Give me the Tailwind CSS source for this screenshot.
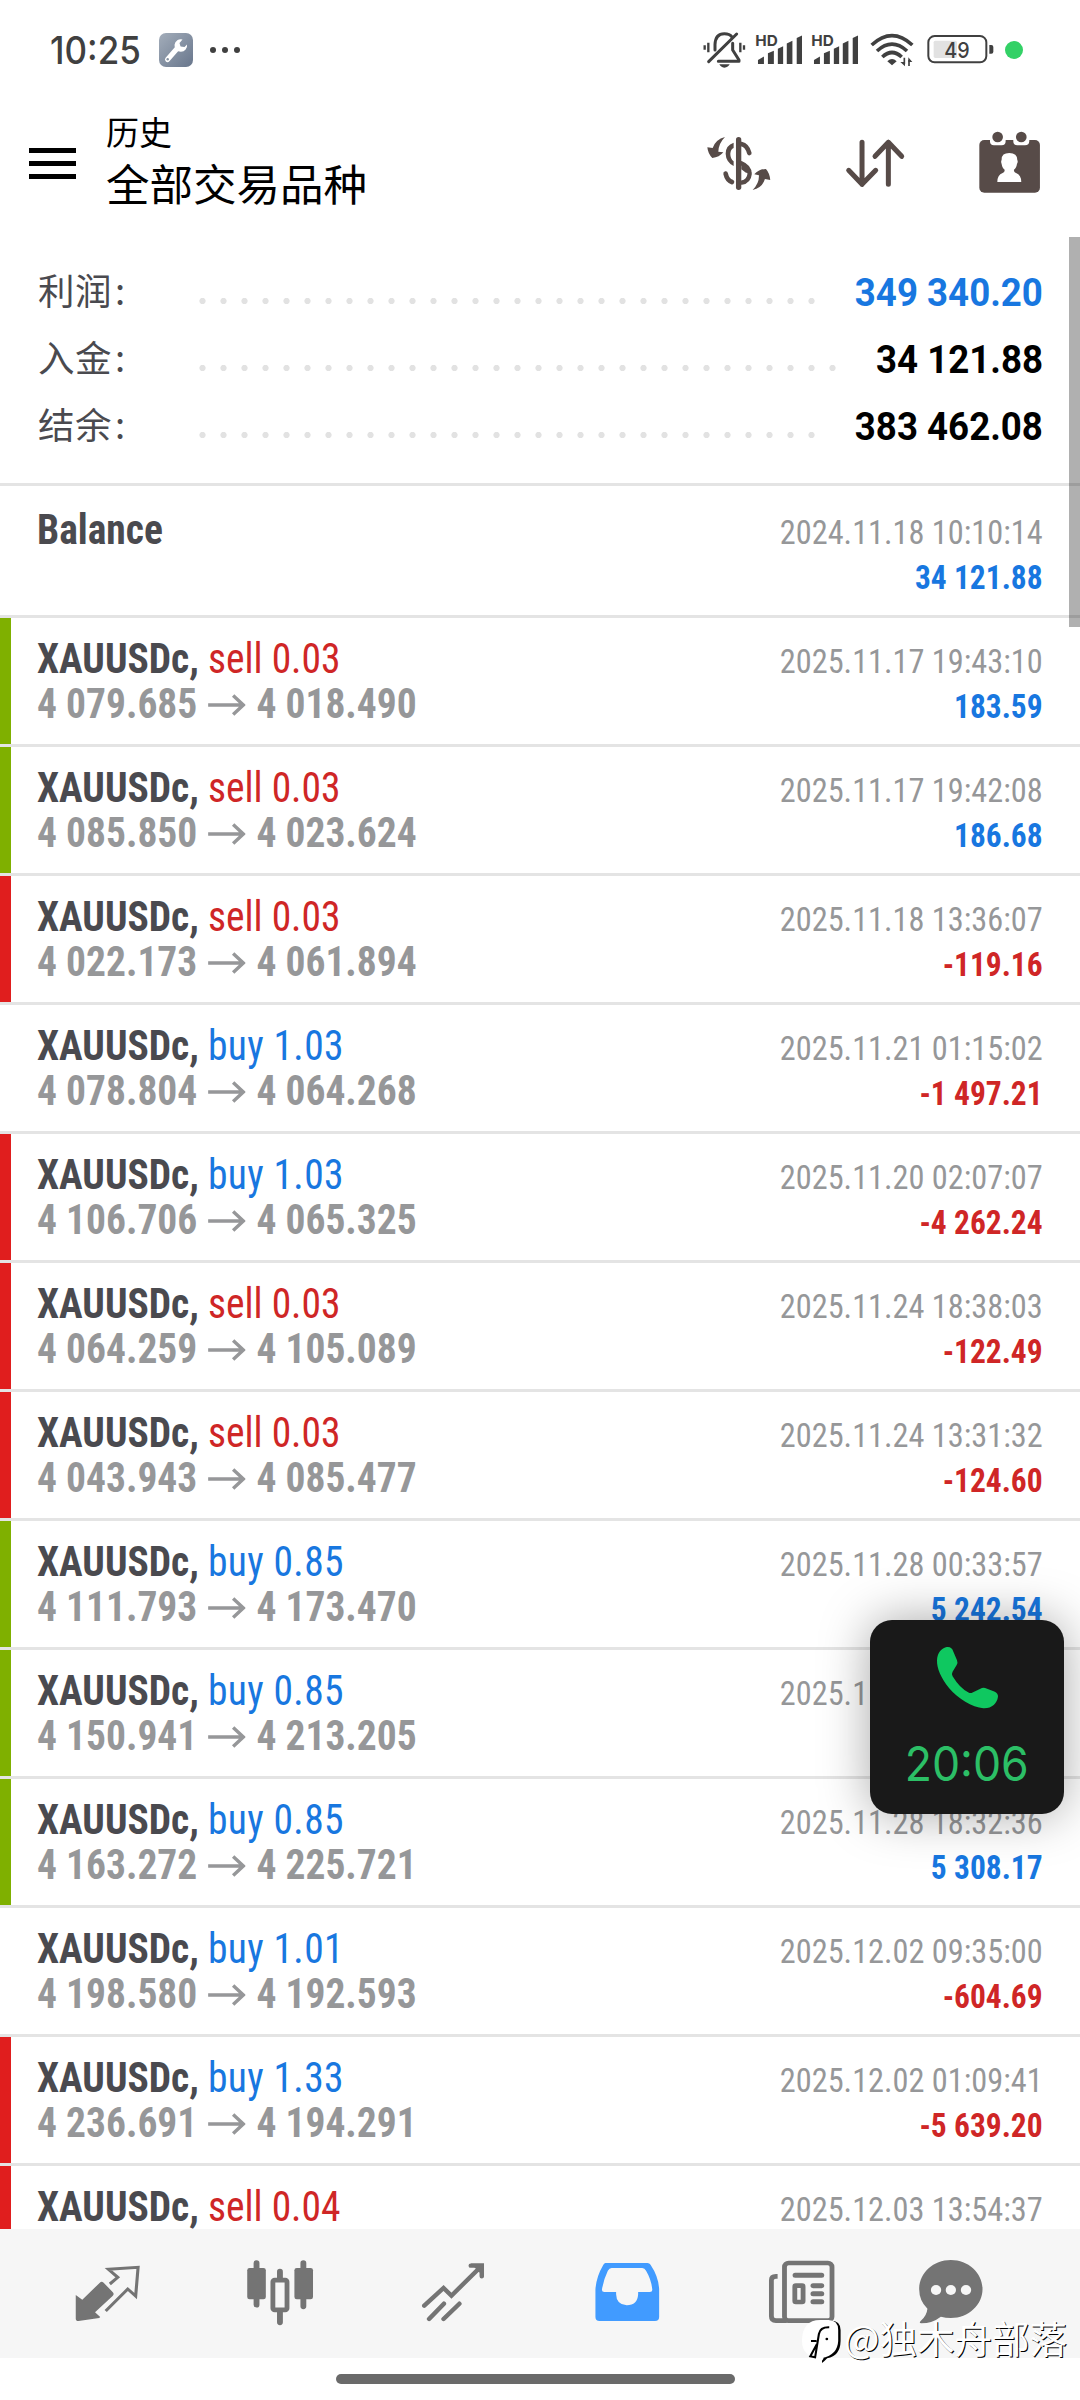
<!DOCTYPE html>
<html lang="zh-CN">
<head>
<meta charset="utf-8">
<title>历史</title>
<script src="https://cdn.jsdelivr.net/npm/@tailwindcss/browser@4"></script>
</head>
<body class="bg-white">
<div class="relative flex h-[2400px] w-[1080px] flex-col overflow-hidden bg-white font-[Roboto,'Noto_Sans_CJK_SC',sans-serif]">

  <!-- status bar -->
  <div class="flex h-[100px] shrink-0 items-center justify-between pr-[57px] pl-[50px]">
    <div class="flex items-center">
      <span class="w-[109px] origin-left scale-x-[0.92] text-[38px] leading-[40px] font-medium text-[#404040] font-[Inter,sans-serif]">10:25</span>
      <svg class="h-[34px] w-[34px]" viewBox="0 0 34 34">
        <defs><linearGradient id="g" x1="0" y1="0" x2="1" y2="1"><stop offset="0" stop-color="#a3adba"/><stop offset="1" stop-color="#68768c"/></linearGradient></defs>
        <rect width="34" height="34" rx="7" fill="url(#g)"/>
        <path d="M8.5 26.5 L19 14.5" stroke="#fff" stroke-width="5" stroke-linecap="round"/>
        <path d="M23.5 6.5 A6.3 6.3 0 1 0 28 11.5 L25.5 14 L21.5 13.5 L20.5 10 Z" fill="#fff"/>
        <circle cx="8.7" cy="26.2" r="1.2" fill="#8592a3"/>
      </svg>
      <div class="ml-[17px] flex gap-[6px]">
        <i class="size-[6px] rounded-full bg-[#404040]"></i><i class="size-[6px] rounded-full bg-[#404040]"></i><i class="size-[6px] rounded-full bg-[#404040]"></i>
      </div>
    </div>
    <div class="flex items-center">
      <svg class="h-[40px] w-[45px]" viewBox="125 90 135 120" fill="none" stroke="#404040" stroke-width="9" stroke-linecap="round">
        <path d="M133 136V149M144 128V157M240 128V157M251 136V149" stroke-linecap="butt" stroke-width="7"/>
        <path d="M164 150V134Q165 101 192 101Q208 101 214 110M217 130V150L236 180V184H174" stroke-linejoin="round"/>
        <path d="M145 185L229 102"/>
        <path d="M177 193H208Q204 202 192 203Q181 202 177 193Z" fill="#404040" stroke="none"/>
      </svg>
      <svg class="ml-[8px] h-[40px] w-[48px]" viewBox="285 90 145 120" fill="#404040">
        <text x="286" y="137" font-family="Inter" font-weight="700" font-size="45" textLength="68" lengthAdjust="spacingAndGlyphs">HD</text>
        <path d="M294 192V180L312 170V192ZM324 192V160L342 152V192ZM354 192V146L370 139V192ZM381 192V130L398 122V192ZM411 192V114L427 106V192Z"/>
      </svg>
      <svg class="ml-[8px] h-[40px] w-[48px]" viewBox="453 90 145 120" fill="#404040">
        <text x="454" y="137" font-family="Inter" font-weight="700" font-size="45" textLength="68" lengthAdjust="spacingAndGlyphs">HD</text>
        <path d="M462 192V180L480 170V192ZM492 192V160L510 152V192ZM522 192V146L538 139V192ZM549 192V130L566 122V192ZM579 192V114L595 106V192Z"/>
      </svg>
      <svg class="ml-[11px] h-[40px] w-[44px]" viewBox="630 90 132 120" fill="none" stroke="#404040" stroke-width="11">
        <path d="M635 135Q696 79 757 135M651 153Q696 112 741 153M667 171Q696 144 725 171"/>
        <path d="M682 184Q696 170 710 184L696 196Z" fill="#404040" stroke="none"/>
        <path d="M733 173V192M747 179V198" stroke-width="5"/>
        <path d="M721 186H735V199ZM745 172L757 186H745Z" fill="#404040" stroke="none"/>
      </svg>
      <svg class="ml-[12px] h-[40px] w-[68px]" viewBox="798 90 204 120">
        <rect x="821" y="122" width="70" height="52" rx="5" fill="#e2e2e2"/>
        <rect x="805" y="108" width="174" height="79" rx="19" fill="none" stroke="#404040" stroke-width="6"/>
        <path d="M988 135H994Q1000 135 1000 141V155Q1000 161 994 161H988Z" fill="#404040"/>
        <text x="853" y="173" font-family="Inter" font-weight="500" font-size="66" textLength="76" lengthAdjust="spacingAndGlyphs" fill="#404040">49</text>
      </svg>
      <i class="ml-[11px] size-[18px] rounded-full bg-[#33d166]"></i>
    </div>
  </div>

  <!-- app bar -->
  <header class="flex h-[137px] shrink-0 items-center justify-between pr-[37px] pl-[29px]">
    <div class="flex items-center gap-[30px]">
      <div class="mt-[-10px] flex w-[47px] flex-col gap-[8px]">
        <i class="h-[5px] bg-black"></i><i class="h-[5px] bg-black"></i><i class="h-[5px] bg-black"></i>
      </div>
      <div class="mt-[-13px] text-black">
        <div class="text-[33px] leading-[50px]">历史</div>
        <div class="text-[43.5px] leading-[56px]">全部交易品种</div>
      </div>
    </div>
    <div class="mt-[-12px] flex gap-[70px]">
      <svg class="h-[65px] w-[66.6px]" viewBox="140 390 200 195" fill="none" stroke="#574b48" stroke-linecap="round">
        <path d="M238 419V562" stroke-width="16"/>
        <path d="M246 432Q264 436 270 459" stroke-width="14"/>
        <path d="M246 490Q271 500 271 522Q269 544 247 548" stroke-width="13"/>
        <path d="M246 488Q262 495 270 505L277 520L260 518L246 508Z" fill="#574b48" stroke="none"/>
        <path d="M223 428Q199 436 199 461Q200 486 223 498V484Q213 476 213 461Q214 448 223 444Z" fill="#574b48" stroke="none"/>
        <path d="M199 521Q203 540 218 546" stroke-width="14"/>
        <path d="M197 411Q169 418 160 444L144 442Q146 462 159 474Q180 472 192 457L177 455Q178 430 197 411Z" fill="#574b48" stroke="none"/>
        <path d="M280 570Q309 563 317 537L333 540Q331 519 320 507Q299 507 285 523L299 526Q300 551 280 570Z" fill="#574b48" stroke="none"/>
      </svg>
      <svg class="h-[65px] w-[63.4px]" viewBox="550 390 190 195" fill="none" stroke="#574b48" stroke-width="15" stroke-linecap="round" stroke-linejoin="round">
        <path d="M607 427V553M567 511L607 553L648 511M686 553V427M646 469L686 427L726 469"/>
      </svg>
      <svg class="h-[65px] w-[66.6px]" viewBox="950 390 200 195">
        <rect x="960" y="420" width="182" height="158" rx="15" fill="#574b48"/>
        <path d="M992 415V424Q992 436 1004 436H1027Q1039 436 1039 424V415ZM1062 415V424Q1062 436 1074 436H1097Q1110 436 1110 424V415Z" fill="#fff"/>
        <circle cx="1015" cy="411" r="16" fill="#574b48"/><circle cx="1086" cy="411" r="16" fill="#574b48"/>
        <path d="M1050 459Q1074 459 1074 480Q1077 484 1073 492Q1071 505 1064 509Q1063 516 1070 519Q1086 525 1086 546H1014Q1014 525 1030 519Q1037 516 1036 509Q1029 505 1027 492Q1024 484 1027 480Q1026 459 1050 459Z" fill="#fff"/>
      </svg>
    </div>
  </header>

  <!-- scrolling history -->
  <main class="relative h-[1992px] shrink-0 overflow-hidden">
    <section id="summary" class="h-[249px] border-b-3 border-[#e4e4e4] pt-[22px] pr-[37px] pl-[38px]"></section>
    <section id="list"></section>
    <div class="absolute top-0 right-0 h-[390px] w-[11px] bg-black/31"></div>
  </main>

  <!-- tab bar -->
  <nav class="flex h-[129px] shrink-0 bg-[#f6f6f6] pl-[21px]">
    <svg class="h-[129px] w-[173px]" preserveAspectRatio="none" viewBox="61 207 502.4 387">
      <path d="M220 405L239 419L290 368Q295 363 301 368L327 396Q333 402 327 408L276 457L291 471L288 474L228 483Q220 483 220 476Z" fill="#747474"/>
      <path d="M319 372L342 352L315 328L401 322L394 408L371 387L307 453" fill="none" stroke="#747474" stroke-width="9"/>
    </svg>
    <svg class="h-[129px] w-[173px]" preserveAspectRatio="none" viewBox="563.4 207 502.4 387" fill="#747474">
      <path d="M745 309V434M881 309V439M813 335V360M813 450V487" stroke="#747474" stroke-width="17" stroke-linecap="round"/>
      <rect x="718" y="324" width="54" height="94" rx="7"/><rect x="855" y="324" width="54" height="94" rx="7"/>
      <rect x="792.5" y="360.500" width="41" height="89" rx="5" fill="#f6f6f6" stroke="#747474" stroke-width="14"/>
    </svg>
    <svg class="h-[129px] w-[173px]" preserveAspectRatio="none" viewBox="1065.7 207 502.4 387" fill="none" stroke="#747474" stroke-width="13" stroke-linecap="round">
      <path d="M1232 437L1288 384L1311 407L1396 320M1367 317H1399V349M1246 477L1289 431M1288 477L1334 431"/>
      <path d="M1382 317H1399V335Z" fill="#747474"/>
    </svg>
    <svg class="h-[129px] w-[173px]" preserveAspectRatio="none" viewBox="0 207 502.4 387">
      <path d="M190 309H312Q318 309 321 314Q345 351 346 388V471Q346 483 334 483H173Q161 483 161 471V388Q163 351 184 314Q187 309 190 309Z" fill="#419bff"/>
      <path d="M208 324H297Q304 324 308 332Q323 358 326 388Q327 396 319 396H285V403Q283 436 252 436Q222 435 221 403V396H187Q179 396 180 388Q184 360 197 332Q201 324 208 324Z" fill="#f6f6f6"/>
    </svg>
    <svg class="h-[129px] w-[173px]" preserveAspectRatio="none" viewBox="502.4 207 502.4 387" fill="none" stroke="#747474" stroke-width="14">
      <rect x="710" y="309" width="138" height="173" rx="12"/>
      <path d="M690 349H685Q672 349 672 361V469Q672 482 685 482H716"/>
      <path d="M741 346H818M793 377H818M793 401H818M793 425H818" stroke-linecap="round" stroke-width="15"/>
      <rect x="740" y="377" width="24" height="49" rx="3"/>
    </svg>
    <svg class="h-[129px] w-[130px]" preserveAspectRatio="none" viewBox="1004.700 207 377.5 387">
      <path d="M1193 300C1245 300 1285 340 1285 387S1245 474 1193 474Q1178 474 1164 470Q1139 490 1107 490Q1099 489 1106 482Q1123 467 1125 446Q1101 422 1101 387C1101 340 1141 300 1193 300Z" fill="#747474"/>
      <circle cx="1150" cy="390" r="15" fill="#f6f6f6"/><circle cx="1193" cy="390" r="15" fill="#f6f6f6"/><circle cx="1237" cy="390" r="15" fill="#f6f6f6"/>
    </svg>
  </nav>
  <div class="mt-[16px] ml-[336px] h-[10px] w-[399px] shrink-0 rounded-full bg-[#6a6a6a]"></div>

  <!-- floating call window -->
  <div class="absolute top-[1620px] left-[870px] flex h-[194px] w-[194px] flex-col items-center rounded-[22px] bg-[#191919] shadow-[0_0_50px_rgba(0,0,0,0.35)]">
    <svg class="mt-[26px] h-[63px] w-[63px]" viewBox="528 320 186 186">
      <path d="M557 324C569 321 576 327 579 336L590 362Q593 369 589 376L577 396Q573 403 577 409Q599 445 624 457Q630 460 636 457L659 446Q666 442 673 444L700 454Q712 459 711 470C708 490 693 505 668 504C635 502 592 475 567 445C543 415 530 385 531 362C532 342 542 328 557 324Z" fill="#0fc860"/>
    </svg>
    <span class="mt-[26px] scale-x-[0.93] text-[48px] leading-[58px] font-normal text-[#2cbf66] font-[Inter,sans-serif]">20:06</span>
  </div>

  <!-- author tag -->
  <div class="absolute top-[2317px] left-[801px] flex items-start">
    <svg class="mt-[1px] h-[46px] w-[42px]" preserveAspectRatio="none" viewBox="756 476 122 138">
      <path d="M838 484Q871 482 871 512V545Q870 590 832 597Q826 604 817 611Q815 603 821 598Z" fill="#000"/>
      <path d="M812 482H836Q864 482 864 512V545Q862 588 816 596Q759 596 759 545Q759 482 812 482Z" fill="#fff"/>
      <path d="M785 545H801M802 555L783 591L797 594L808 524Q812 503 838 504" fill="none" stroke="#000" stroke-width="6"/>
      <circle cx="831" cy="539" r="4" fill="#000"/>
    </svg>
    <span class="ml-[1px] text-[37.5px] leading-[40px] whitespace-nowrap text-white font-['Noto_Sans_CJK_SC',sans-serif] [text-shadow:1px_1px_0.5px_#000]">@独木舟部落</span>
  </div>
</div>

<script>
  const summary = [
    ['利润', '349 340.20', 'text-[#1877e0]', 'w-[630px]'],
    ['入金', '34 121.88', 'text-black', 'w-[651px]'],
    ['结余', '383 462.08', 'text-black', 'w-[630px]'],
  ];
  document.getElementById('summary').innerHTML = summary.map(([label, value, color, dots]) => `
    <div class="flex h-[67px] items-center">
      <span class="mt-[-6px] w-[154px] text-[36.5px] leading-[54px] tracking-[0.5px] text-[#4a4a4f] font-['Noto_Sans_CJK_SC',sans-serif]">${label}<span class="ml-[3px]">:</span></span>
      <span class="mt-[17px] h-[8px] ${dots} bg-[radial-gradient(circle_at_center,#e2e2e2_2.700px,transparent_3.5px)] bg-[length:21px_8px]"></span>
      <span class="ml-auto origin-right scale-x-[0.965] pt-[1px] text-[38px] leading-[44px] font-bold ${color}">${value}</span>
    </div>`).join('');

  const G = 'bg-[#7fb000]', R = 'bg-[#e01e1e]', N = 'bg-white';
  const rows = [
    [G, 'sell 0.03', '4 079.685', '4 018.490', '2025.11.17 19:43:10', '183.59'],
    [G, 'sell 0.03', '4 085.850', '4 023.624', '2025.11.17 19:42:08', '186.68'],
    [R, 'sell 0.03', '4 022.173', '4 061.894', '2025.11.18 13:36:07', '-119.16'],
    [N, 'buy 1.03', '4 078.804', '4 064.268', '2025.11.21 01:15:02', '-1 497.21'],
    [R, 'buy 1.03', '4 106.706', '4 065.325', '2025.11.20 02:07:07', '-4 262.24'],
    [R, 'sell 0.03', '4 064.259', '4 105.089', '2025.11.24 18:38:03', '-122.49'],
    [R, 'sell 0.03', '4 043.943', '4 085.477', '2025.11.24 13:31:32', '-124.60'],
    [G, 'buy 0.85', '4 111.793', '4 173.470', '2025.11.28 00:33:57', '5 242.54'],
    [G, 'buy 0.85', '4 150.941', '4 213.205', '2025.11.28 18:32:36', ''],
    [G, 'buy 0.85', '4 163.272', '4 225.721', '2025.11.28 18:32:36', '5 308.17'],
    [N, 'buy 1.01', '4 198.580', '4 192.593', '2025.12.02 09:35:00', '-604.69'],
    [R, 'buy 1.33', '4 236.691', '4 194.291', '2025.12.02 01:09:41', '-5 639.20'],
    [R, 'sell 0.04', '', '', '2025.12.03 13:54:37', ''],
  ];
  const right = (date, amount) => `
    <div class="pt-[21px] text-right text-[34px] leading-[45px]">
      <div class="origin-right scale-x-[0.95] text-[#969799]">${date}</div>
      <div class="origin-right scale-x-[0.925] font-bold ${amount[0] === '-' ? 'text-[#cf2626]' : 'text-[#1877e0]'}">${amount}</div>
    </div>`;
  const row = ([bar, op, from, to, date, amount]) => `
    <div class="flex h-[129px] border-b-3 border-[#e4e4e4] pr-[37px] [font-stretch:75%]">
      <div class="w-[10.5px] ${bar}"></div>
      <div class="ml-[26px] flex-1 origin-left scale-x-[0.94] pt-[18px] text-[42px] leading-[45px]">
        <div class="font-bold text-[#4a4a4f]">XAUUSDc, <span class="font-normal ${op[0] === 's' ? 'text-[#cf2626]' : 'tracking-[0.4px] text-[#1877e0]'}">${op}</span></div>
        ${from ? `<div class="flex items-center font-bold text-[#969799]">
          <span>${from}</span>
          <svg class="mr-[11px] ml-[12px] mt-[2px] h-[22px] w-[40px]" preserveAspectRatio="none" viewBox="0 0 39 22" fill="none" stroke="#969799" stroke-width="3.6"><path d="M0 11H37M26 1.500L36.500 11L26 20.500"/></svg>
          <span>${to}</span></div>` : ''}
      </div>
      ${right(date, amount)}
    </div>`;
  document.getElementById('list').innerHTML = `
    <div class="flex h-[132px] justify-between border-b-3 border-[#e4e4e4] pt-[3px] pr-[37px] pl-[36.5px] [font-stretch:75%]">
      <div class="origin-left scale-x-[0.94] pt-[18px] text-[42px] leading-[45px] font-bold text-[#4a4a4f]">Balance</div>
      ${right('2024.11.18 10:10:14', '34 121.88')}
    </div>` + rows.map(row).join('');
</script>
</body>
</html>
